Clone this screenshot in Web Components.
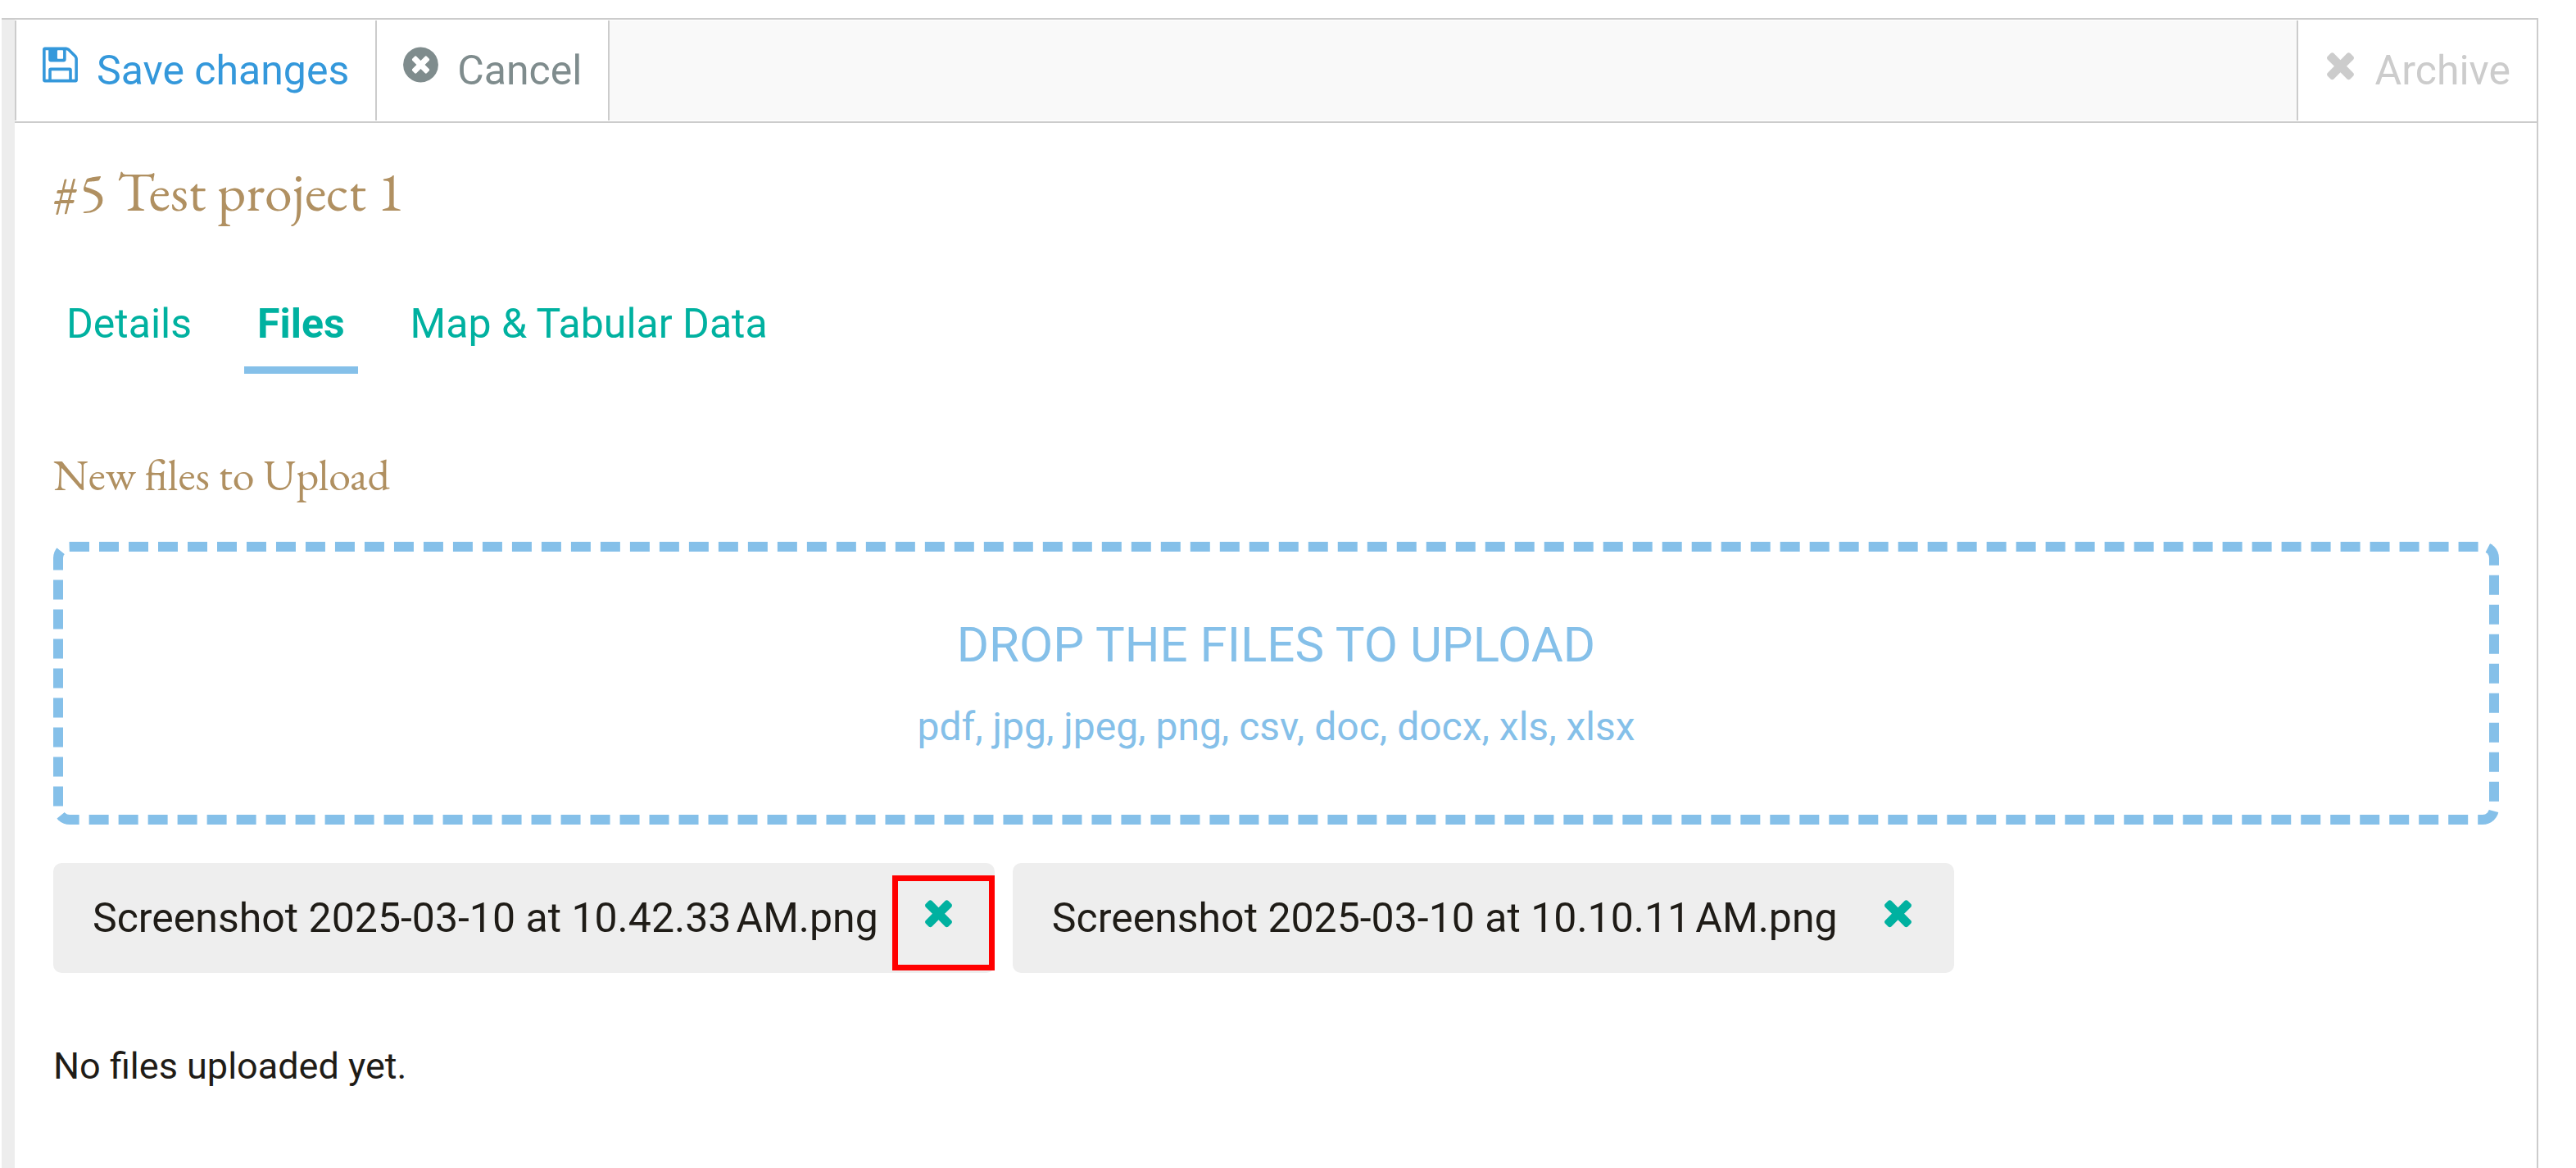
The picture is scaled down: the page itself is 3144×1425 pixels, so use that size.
<!DOCTYPE html>
<html lang="en">
<head>
<meta charset="utf-8">
<title>Test project 1</title>
<style>
  body { margin: 0; background: #fff; font-family: Roboto, sans-serif; font-size: 50px; line-height: 60px; color: #1f1c17; }
</style>
</head>
<body>
<project-panel>
  <tool-bar slot="toolbar">
    <tool-button icon="save" style="color:#3498db">Save changes</tool-button>
    <tool-button icon="cancel" style="color:#7f8c8d" last>Cancel</tool-button>
    <tool-button slot="end" icon="times" style="color:#ccc" disabled>Archive</tool-button>
  </tool-bar>
  <page-heading>#5 Test project 1</page-heading>
  <tab-list>
    <tab-link>Details</tab-link>
    <tab-link active>Files</tab-link>
    <tab-link>Map &amp; Tabular Data</tab-link>
  </tab-list>
  <section-heading>New files to Upload</section-heading>
  <drop-zone>
    DROP THE FILES TO UPLOAD
    <span slot="types">pdf, jpg, jpeg, png, csv, doc, docx, xls, xlsx</span>
  </drop-zone>
  <file-list>
    <file-chip marked>Screenshot 2025-03-10 at 10.42.33&#x202F;AM.png</file-chip>
    <file-chip>Screenshot 2025-03-10 at 10.10.11&#x202F;AM.png</file-chip>
  </file-list>
  <empty-note>No files uploaded yet.</empty-note>
</project-panel>

<script>
const ICONS = {
  save: [128, 1536, 'M512 1536h768v-384h-768v384zm896 0h128v-896q0-14-10-38.5t-20-34.5l-281-281q-10-10-34-20t-39-10v416q0 40-28 68t-68 28h-576q-40 0-68-28t-28-68v-416h-128v1280h128v-416q0-40 28-68t68-28h832q40 0 68 28t28 68v416zm-384-928v-320q0-13-9.5-22.5t-22.5-9.5h-192q-13 0-22.5 9.5t-9.5 22.5v320q0 13 9.5 22.5t22.5 9.5h192q13 0 22.5-9.5t9.5-22.5zm640 32v928q0 40-28 68t-68 28h-1344q-40 0-68-28t-28-68v-1344q0-40 28-68t68-28h928q40 0 88 20t76 48l280 280q28 28 48 76t20 88z'],
  cancel: [128, 1536, 'M1277 1122q0-26-19-45l-181-181 181-181q19-19 19-45 0-27-19-46l-90-90q-19-19-46-19-26 0-45 19l-181 181-181-181q-19-19-45-19-27 0-46 19l-90 90q-19 19-19 46 0 26 19 45l181 181-181 181q-19 19-19 45 0 27 19 46l90 90q19 19 46 19 26 0 45-19l181-181 181 181q19 19 45 19 27 0 46-19l90-90q19-19 19-46zm387-226q0 209-103 385.5t-279.5 279.5-385.5 103-385.5-103-279.5-279.5-103-385.5 103-385.5 279.5-279.5 385.5-103 385.5 103 279.5 279.5 103 385.5z'],
  times: [192, 1408, 'M1490 1322q0 40-28 68l-136 136q-28 28-68 28t-68-28l-294-294-294 294q-28 28-68 28t-68-28l-136-136q-28-28-28-68t28-68l294-294-294-294q-28-28-28-68t28-68l136-136q28-28 68-28t68 28l294 294 294-294q28-28 68-28t68 28l136 136q28 28 28 68t-28 68l-294 294 294 294q28 28 28 68z']
};

function define(name, render) {
  customElements.define(name, class extends HTMLElement {
    constructor() {
      super();
      this.attachShadow({ mode: 'open' });
    }
    connectedCallback() {
      this.shadowRoot.innerHTML = render(this);
    }
  });
}

define('glyph-icon', el => {
  const [x, w, d] = ICONS[el.getAttribute('name')];
  return `<style>
    :host { display: block; flex: none; margin-bottom: 14px; }
    svg { display: block; height: 50px; fill: currentColor; }
  </style>
  <svg viewBox="${x} 0 ${w} 1792" width="${Math.round(w * 50 / 1792)}" aria-hidden="true"><path d="${d}"/></svg>`;
});

define('project-panel', () => `<style>
    :host { display: flex; flex-direction: column; box-sizing: border-box; min-height: 100vh; padding: 22px 46px 0 2px; }
    .frame { flex: 1; display: flex; border-top: 2px solid #ccc; border-right: 2px solid #ccc; }
    .rail { flex: none; width: 16px; background: #ededed; }
    .main { flex: 1; min-width: 0; }
    .content { padding: 47px 46px 0 47px; }
  </style>
  <div class="frame"><div class="rail"></div><div class="main">
    <slot name="toolbar"></slot>
    <div class="content"><slot></slot></div>
  </div></div>`);

define('tool-bar', () => `<style>
    :host { display: flex; padding: 1px 0; border-bottom: 2px solid #ccc; }
    .space { flex: 1; background: #f9f9f9; }
  </style>
  <slot></slot><div class="space"></div><slot name="end"></slot>`);

define('tool-button', el => `<style>
    :host { display: block; border-left: 2px solid #ccc; }
    :host([last]) { border-right: 2px solid #ccc; }
    button { all: unset; box-sizing: border-box; height: 122px; display: flex; align-items: center; gap: 23px; padding: 0 32px; cursor: pointer; white-space: nowrap; }
    button:disabled { cursor: default; }
  </style>
  <button type="button" ${el.hasAttribute('disabled') ? 'disabled' : ''}><glyph-icon name="${el.getAttribute('icon')}"></glyph-icon><span><slot></slot></span></button>`);

define('page-heading', () => `<style>
    :host { display: block; }
    h1 { margin: 0; font: 400 68px/72px "EB Garamond", "Liberation Serif", serif; font-variant-ligatures: no-common-ligatures; color: #b09061; }
  </style><h1><slot></slot></h1>`);

define('section-heading', () => `<style>
    :host { display: block; margin: 93px 0 52px; }
    h2 { margin: 0; font: 400 54px/60px "EB Garamond", "Liberation Serif", serif; color: #b09061; }
  </style><h2><slot></slot></h2>`);

define('tab-list', () => `<style>
    :host { display: block; margin-top: 96px; }
    nav { display: flex; gap: 48px; }
  </style><nav><slot></slot></nav>`);

define('tab-link', el => `<style>
    :host { display: block; }
    a { display: block; padding: 0 16px 22px; border-bottom: 9px solid transparent; color: #00b1a0; text-decoration: none; }
    :host([active]) a { font-weight: 700; border-color: #85c0e9; }
  </style><a href="#" ${el.hasAttribute('active') ? 'aria-current="page"' : ''}><slot></slot></a>`);

define('drop-zone', () => `<style>
    :host { display: flex; flex-direction: column; align-items: center; gap: 34px; padding: 78px 0 77px; border: 12px dashed #85c0e9; border-radius: 20px; color: #85c0e9; }
    .title { font-size: 60px; line-height: 72px; }
    .types { font-size: 48px; }
  </style><div class="title"><slot></slot></div><div class="types"><slot name="types"></slot></div>`);

define('file-list', () => `<style>
    :host { display: flex; flex-wrap: wrap; gap: 22px; margin-top: 47px; }
  </style><slot></slot>`);

define('file-chip', () => `<style>
    :host { position: relative; display: flex; align-items: center; padding: 35px 0 35px 48px; border-radius: 10px; background: #eee; }
    button { all: unset; display: block; padding: 0 49px 0 54px; color: #00b1a0; cursor: pointer; }
    :host([marked])::after { content: ""; position: absolute; box-sizing: border-box; top: 15px; right: 0; bottom: 3px; width: 125px; border: 7px solid #f00; pointer-events: none; }
  </style><span><slot></slot></span><button type="button" aria-label="Remove file"><glyph-icon name="times"></glyph-icon></button>`);

define('empty-note', () => `<style>
    :host { display: block; margin-top: 86px; }
    p { margin: 0; font-size: 45px; line-height: 56px; }
  </style><p><slot></slot></p>`);
</script>
</body>
</html>
